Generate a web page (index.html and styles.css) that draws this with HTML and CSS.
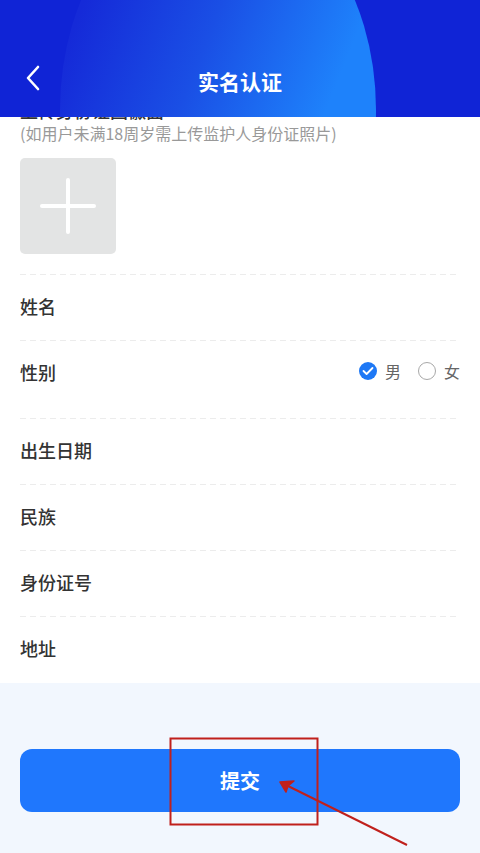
FILE: index.html
```html
<!DOCTYPE html>
<html lang="zh-CN">
<head>
<meta charset="utf-8">
<title>实名认证</title>
<link rel="stylesheet" href="styles.css">
</head>
<body>
<div class="page">
  <header class="topbar">
    <div class="topbar-circle"></div>
    <div class="topbar-row">
      <svg class="back" width="20" height="28" viewBox="0 0 20 28"><path d="M15 3 L5 14 L15 25" fill="none" stroke="#fff" stroke-width="2.6" stroke-linecap="round" stroke-linejoin="round"/></svg>
      <h1 class="title">实名认证</h1>
    </div>
  </header>

  <main class="content">
    <section class="upload">
      <div class="upload-title">上传身份证国徽面</div>
      <div class="upload-tip">(如用户未满18周岁需上传监护人身份证照片)</div>
      <div class="upload-box">
        <span class="plus-h"></span>
        <span class="plus-v"></span>
      </div>
    </section>
    <div class="row"><span class="label">姓名</span></div>
    <div class="row row-gender">
      <span class="label">性别</span>
      <div class="radios">
        <span class="radio">
          <span class="dot dot-on"><svg width="12" height="10" viewBox="0 0 12 10"><path d="M1.5 5 L4.6 8 L10.5 2" fill="none" stroke="#fff" stroke-width="1.8" stroke-linecap="round" stroke-linejoin="round"/></svg></span>
          <span class="radio-text">男</span>
        </span>
        <span class="radio">
          <span class="dot dot-off"></span>
          <span class="radio-text">女</span>
        </span>
      </div>
    </div>
    <div class="row"><span class="label">出生日期</span></div>
    <div class="row"><span class="label">民族</span></div>
    <div class="row"><span class="label">身份证号</span></div>
    <div class="row row-last"><span class="label">地址</span></div>
  </main>

  <footer class="bottom">
    <button class="submit">提交</button>
  </footer>

  <svg class="annot" width="480" height="853" viewBox="0 0 480 853">
    <rect x="170.5" y="738.5" width="147" height="86" fill="none" stroke="#c0201c" stroke-width="2"/>
    <line x1="407" y1="845" x2="284" y2="784" stroke="#c0201c" stroke-width="2"/>
    <path d="M280 782 L294 781 L288 786 L286 792 Z" fill="#c0201c" stroke="#c0201c" stroke-width="1.5" stroke-linejoin="round"/>
  </svg>
</div>
</body>
</html>
```

FILE: styles.css
```css
* { box-sizing: border-box; }
html, body { margin: 0; padding: 0; }
body {
  font-family: "Noto Sans CJK SC", "Noto Sans", sans-serif;
  background: #f2f7fe;
}
.page {
  position: relative;
  width: 480px;
  height: 853px;
  overflow: hidden;
  background: #f2f7fe;
}
.topbar {
  position: absolute;
  top: 0;
  left: 0;
  width: 480px;
  height: 117px;
  background: #1024d6;
  overflow: hidden;
  z-index: 2;
}
.topbar-circle {
  position: absolute;
  left: 60px;
  top: -110px;
  width: 316px;
  height: 440px;
  border-radius: 50%;
  background: linear-gradient(112deg, #152ad8 14%, #1a4fe5 42%, #1e82fb 72%);
}
.topbar-row {
  position: relative;
  height: 117px;
  display: flex;
  align-items: center;
  justify-content: center;
  padding-top: 44px;
}
.back {
  position: absolute;
  left: 23px;
  top: 64px;
}
.title {
  margin: 0;
  color: #fff;
  font-size: 21px;
  font-weight: 700;
  line-height: 30px;
}
.content {
  background: #fff;
  padding: 0 20px;
}
.upload {
  padding-top: 99px;
  padding-bottom: 20px;
}
.upload-title {
  font-size: 18px;
  line-height: 22px;
  color: #333;
  font-weight: 500;
}
.upload-tip {
  font-size: 16px;
  line-height: 24px;
  color: #999;
}
.upload-box {
  position: relative;
  margin-top: 13px;
  width: 96px;
  height: 96px;
  border-radius: 5px;
  background: #e3e4e4;
}
.plus-h, .plus-v {
  position: absolute;
  background: #fff;
  border-radius: 2px;
}
.plus-h { left: 20px; top: 46px; width: 56px; height: 4px; }
.plus-v { left: 46px; top: 20px; width: 4px; height: 56px; }
.row {
  display: flex;
  align-items: flex-start;
  justify-content: space-between;
  height: 66px;
  padding-top: 20px;
  background-image: repeating-linear-gradient(to right, #ececec 0 6px, transparent 6px 10px);
  background-size: 100% 1px;
  background-repeat: no-repeat;
  background-position: top left;
}
.row-gender { height: 78px; }
.row-last { height: 67px; }
.label {
  font-size: 18px;
  line-height: 24px;
  color: #333;
  font-weight: 500;
}
.radios {
  display: flex;
  align-items: center;
  gap: 17px;
  height: 24px;
  margin-top: -1px;
}
.radio {
  display: flex;
  align-items: center;
  gap: 8px;
}
.dot {
  width: 18px;
  height: 18px;
  border-radius: 50%;
  display: flex;
  align-items: center;
  justify-content: center;
}
.dot-on { background: #1e78f5; }
.dot-off { border: 1.5px solid #a8a8a8; }
.radio-text {
  font-size: 16px;
  color: #666;
  line-height: 24px;
}
.bottom {
  padding: 66px 20px 0;
}
.submit {
  display: block;
  width: 440px;
  height: 63px;
  border: none;
  border-radius: 12px;
  background: #1f77fd;
  color: #fff;
  font-family: "Noto Sans CJK SC", "Noto Sans", sans-serif;
  font-size: 20px;
  font-weight: 700;
}
.annot {
  position: absolute;
  left: 0;
  top: 0;
  pointer-events: none;
  z-index: 3;
}
```
